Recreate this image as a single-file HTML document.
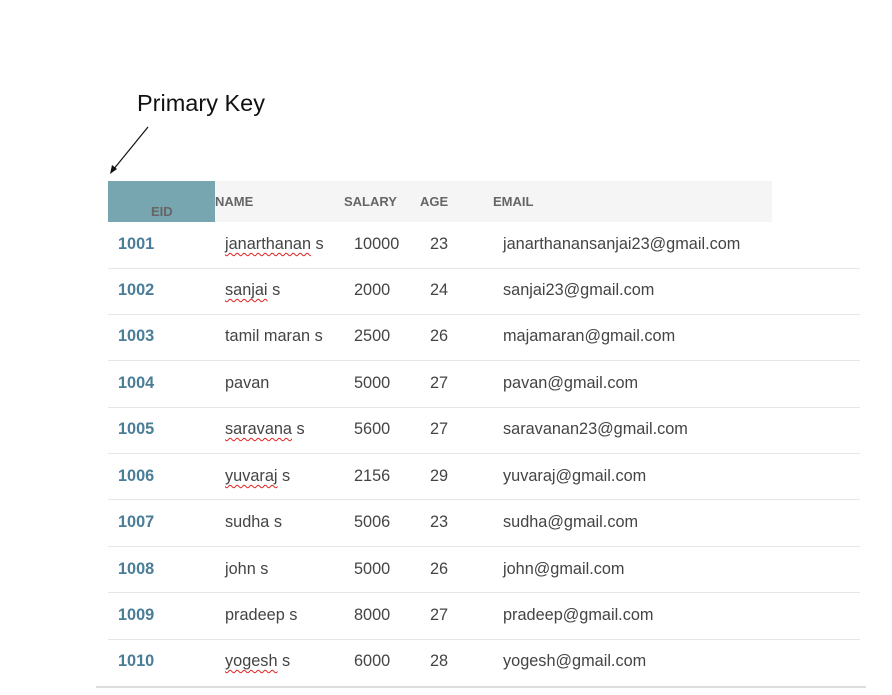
<!DOCTYPE html>
<html><head><meta charset="utf-8"><style>
body{margin:0;width:892px;height:695px;background:#fff;position:relative;overflow:hidden;font-family:"Liberation Sans",sans-serif}
.a{position:absolute;white-space:nowrap}
.h{font-size:13px;font-weight:bold;color:#666;top:194px}
.c{font-size:16.3px;color:#444}
.id{font-size:16.3px;font-weight:bold;color:#4a7d98}
.ln{position:absolute;left:108px;width:752px;height:1px;background:#e6e6e6}
.w{text-decoration:underline wavy #e02020;text-decoration-thickness:1px;text-underline-offset:3px}
</style></head><body>
<div class="a" style="left:137px;top:90px;font-size:23.5px;color:#111">Primary Key</div>
<svg class="a" style="left:105px;top:124px" width="50" height="52"><line x1="43" y1="3" x2="8" y2="46" stroke="#111" stroke-width="1.2"/><polygon points="5,50 7,41 12,45" fill="#111"/></svg>
<div class="a" style="left:108px;top:181px;width:664px;height:41px;background:#f5f5f5"></div>
<div class="a" style="left:108px;top:181px;width:107px;height:41px;background:#77a5b0"></div>
<div class="a h" style="left:151px;top:204px">EID</div>
<div class="a h" style="left:215px">NAME</div>
<div class="a h" style="left:344px">SALARY</div>
<div class="a h" style="left:420px">AGE</div>
<div class="a h" style="left:493px">EMAIL</div>
<div class="ln" style="top:268px"></div><div class="ln" style="top:314px"></div><div class="ln" style="top:360px"></div><div class="ln" style="top:407px"></div><div class="ln" style="top:453px"></div><div class="ln" style="top:499px"></div><div class="ln" style="top:546px"></div><div class="ln" style="top:592px"></div><div class="ln" style="top:639px"></div>
<div class="a" style="left:96px;top:686px;width:770px;height:2px;background:#ddd"></div>

<div class="a id" style="left:118px;top:235px">1001</div><div class="a c" style="left:225px;top:235px"><span class="w">janarthanan</span> s</div><div class="a c" style="left:354px;top:235px">10000</div><div class="a c" style="left:430px;top:235px">23</div><div class="a c" style="left:503px;top:235px">janarthanansanjai23@gmail.com</div>
<div class="a id" style="left:118px;top:281px">1002</div><div class="a c" style="left:225px;top:281px"><span class="w">sanjai</span> s</div><div class="a c" style="left:354px;top:281px">2000</div><div class="a c" style="left:430px;top:281px">24</div><div class="a c" style="left:503px;top:281px">sanjai23@gmail.com</div>
<div class="a id" style="left:118px;top:327px">1003</div><div class="a c" style="left:225px;top:327px">tamil maran s</div><div class="a c" style="left:354px;top:327px">2500</div><div class="a c" style="left:430px;top:327px">26</div><div class="a c" style="left:503px;top:327px">majamaran@gmail.com</div>
<div class="a id" style="left:118px;top:374px">1004</div><div class="a c" style="left:225px;top:374px">pavan</div><div class="a c" style="left:354px;top:374px">5000</div><div class="a c" style="left:430px;top:374px">27</div><div class="a c" style="left:503px;top:374px">pavan@gmail.com</div>
<div class="a id" style="left:118px;top:420px">1005</div><div class="a c" style="left:225px;top:420px"><span class="w">saravana</span> s</div><div class="a c" style="left:354px;top:420px">5600</div><div class="a c" style="left:430px;top:420px">27</div><div class="a c" style="left:503px;top:420px">saravanan23@gmail.com</div>
<div class="a id" style="left:118px;top:467px">1006</div><div class="a c" style="left:225px;top:467px"><span class="w">yuvaraj</span> s</div><div class="a c" style="left:354px;top:467px">2156</div><div class="a c" style="left:430px;top:467px">29</div><div class="a c" style="left:503px;top:467px">yuvaraj@gmail.com</div>
<div class="a id" style="left:118px;top:513px">1007</div><div class="a c" style="left:225px;top:513px">sudha s</div><div class="a c" style="left:354px;top:513px">5006</div><div class="a c" style="left:430px;top:513px">23</div><div class="a c" style="left:503px;top:513px">sudha@gmail.com</div>
<div class="a id" style="left:118px;top:560px">1008</div><div class="a c" style="left:225px;top:560px">john s</div><div class="a c" style="left:354px;top:560px">5000</div><div class="a c" style="left:430px;top:560px">26</div><div class="a c" style="left:503px;top:560px">john@gmail.com</div>
<div class="a id" style="left:118px;top:606px">1009</div><div class="a c" style="left:225px;top:606px">pradeep s</div><div class="a c" style="left:354px;top:606px">8000</div><div class="a c" style="left:430px;top:606px">27</div><div class="a c" style="left:503px;top:606px">pradeep@gmail.com</div>
<div class="a id" style="left:118px;top:652px">1010</div><div class="a c" style="left:225px;top:652px"><span class="w">yogesh</span> s</div><div class="a c" style="left:354px;top:652px">6000</div><div class="a c" style="left:430px;top:652px">28</div><div class="a c" style="left:503px;top:652px">yogesh@gmail.com</div>
</body></html>
